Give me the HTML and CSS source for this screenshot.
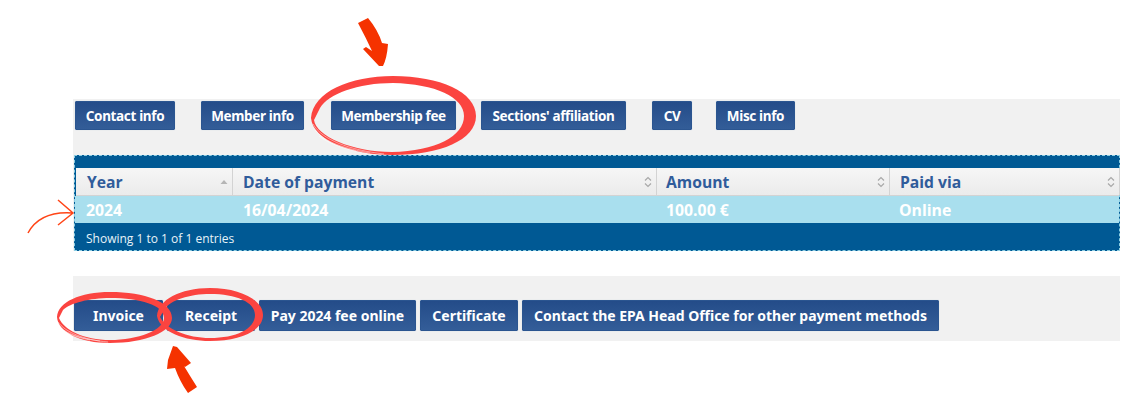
FILE: index.html
```html
<!DOCTYPE html>
<html lang="en">
<head>
<meta charset="utf-8">
<title>Membership fee</title>
<link rel="stylesheet" href="styles.css">
</head>
<body>
<main class="page">
  <section class="tabs-panel">
    <nav class="tabs">
      <a class="btn w-contact">Contact info</a>
      <a class="btn w-member">Member info</a>
      <a class="btn w-fee">Membership fee</a>
      <a class="btn w-sections">Sections' affiliation</a>
      <a class="btn w-cv">CV</a>
      <a class="btn w-misc">Misc info</a>
    </nav>
    <div class="table-wrap">
      <div class="table-top"></div>
      <div class="grid head">
        <div class="th">Year<svg class="sort" viewBox="0 0 10 12"><path d="M1.500 8 5 4l3.500 4z" fill="#b5b5b5"/></svg></div>
        <div class="th">Date of payment<svg class="sort" viewBox="0 0 10 12"><path d="M2 4.500 5 1.500l3 3M2 7.500l3 3 3-3" fill="none" stroke="#a8a8a8" stroke-width="1.200"/></svg></div>
        <div class="th">Amount<svg class="sort" viewBox="0 0 10 12"><path d="M2 4.500 5 1.500l3 3M2 7.500l3 3 3-3" fill="none" stroke="#a8a8a8" stroke-width="1.200"/></svg></div>
        <div class="th">Paid via<svg class="sort" viewBox="0 0 10 12"><path d="M2 4.500 5 1.500l3 3M2 7.500l3 3 3-3" fill="none" stroke="#a8a8a8" stroke-width="1.200"/></svg></div>
      </div>
      <div class="grid row">
        <div class="td">2024</div>
        <div class="td">16/04/2024</div>
        <div class="td">100.00 €</div>
        <div class="td">Online</div>
      </div>
      <div class="table-foot">Showing 1 to 1 of 1 entries</div>
    </div>
  </section>
  <section class="actions-panel">
    <a class="btn w-invoice">Invoice</a>
    <a class="btn w-receipt">Receipt</a>
    <a class="btn w-pay">Pay 2024 fee online</a>
    <a class="btn w-cert">Certificate</a>
    <a class="btn w-office">Contact the EPA Head Office for other payment methods</a>
  </section>
</main>
<svg class="marks" viewBox="0 0 1121 407" width="1121" height="407" aria-hidden="true">
  <g fill="#f53200">
    <path d="M358 23 368 18Q378 30 382 43L388 44Q387 58 383 66L379 66 363 49 366 47 372 51Q366 38 358 23Z"/>
    <path d="M173 346 177 347 191 363 185 367 184 366Q190 376 197 387L188 393Q180 382 175 368L167 369 168 360Z"/>
  </g>
  <path d="M28 233Q40 211 72 213M58 200 73 213 58 225" fill="none" stroke="#ff4517" stroke-width="1.500"/>
  <g fill="#fb4440" fill-rule="evenodd">
    <path d="M311 118C313 92 350 76 393 76 440 76 476 92 476 116 476 140 440 155 393 155 350 155 313 140 311 118ZM314 120C316 136 352 152 392 152 436 151 464 136 464 116 464 97 435 84 393 83 358 83 328 94 320 108Z"/>
    <path d="M57 317C58 302 80 292 110 292 145 292 172 302 172 318 172 332 145 343 110 343 80 343 58 332 57 317ZM59 318C64 330 84 340 110 340 138 340 164 330 164 318 164 305 140 298 110 298 90 298 70 303 63 310Z"/>
    <path d="M157 316C158 300 180 288 210 288 240 288 263 300 263 315 263 331 240 341 210 341 185 341 160 332 157 316ZM160 317C166 329 187 338 210 338 236 338 255 329 255 315 255 302 236 294 210 294 190 294 170 300 164 310Z"/>
  </g>
  <g fill="none" stroke="#ffffff" stroke-width=".6" opacity=".8">
    <path d="M313 124C322 140 350 150 384 154M315 130C324 142 346 149 370 153M319 136C328 143 342 148 356 151"/>
    <path d="M58 322C65 332 84 340 108 342M60 327C68 335 84 339 100 341M63 331C70 335 80 338 90 340"/>
  </g>
</svg>
</body>
</html>
```
FILE: styles.css
```css
* { box-sizing: border-box; }
html, body { margin: 0; background: #fff; }
body { position: relative; width: 1121px; height: 407px; overflow: hidden; font-family: "Open Sans", "Liberation Sans", sans-serif; }
.page { padding: 99px 1px 0 73px; }
.tabs-panel { background: #f1f1f1; }
.tabs { display: flex; height: 56px; padding: 2px 0 0 2px; align-items: flex-start; gap: 26px; }
.btn {
  display: flex; align-items: center; justify-content: center; height: 29px;
  border: 1px solid #2b5590; border-radius: 1px;
  box-shadow: 0 0 1px #b9c6d8;
  background: linear-gradient(#244c89, #335d98);
  color: #fff; font: 700 13.5px "Noto Sans", "Open Sans", sans-serif; white-space: nowrap;
  letter-spacing: -.35px;
}
.w-contact { width: 100px; }
.w-member { width: 103px; }
.w-fee { width: 125px; margin-left: 1px; }
.w-sections { width: 145px; margin-left: -1px; }
.w-cv { width: 40px; }
.w-misc { width: 79px; margin-left: -2px; }
.table-wrap { margin-left: 1px; border: 1px dashed #8ccfe4; background: #005994; height: 96px; }
.table-top { height: 12px; }
.grid { display: grid; grid-template-columns: 157px 424px 233px 230px; }
.head { height: 28px; background: linear-gradient(#f6f6f6, #ebebeb); color: #305c9b; font-size: 15.7px; font-weight: 700; border-bottom: 1px solid #d3d3d3; margin-left: 1px; }
.th { display: flex; align-items: center; justify-content: space-between; padding: 1px 3px 0 10px; border-right: 1px solid #d3d3d3; }
.th:first-child { padding-left: 11px; }
.th:nth-child(3) { padding-left: 9px; }
.sort { width: 10px; height: 12px; }
.row { height: 28px; background: #a9dfee; color: #fff; font-size: 15.8px; font-weight: 700; border-bottom: 1px solid #005994; }
.td { display: flex; align-items: center; padding-left: 10px; }
.row .td:first-child { padding-left: 11px; }
.row .td:nth-child(2) { padding-left: 11px; }
.row .td:nth-child(3) { padding-left: 10px; }
.table-foot { display: flex; align-items: center; height: 28px; padding-left: 11px; color: #e8f3f8; font-size: 12px; font-weight: 400; }
.actions-panel { display: flex; gap: 4px; align-items: flex-start; margin-top: 25px; height: 65px; padding: 24px 0 0 1px; background: #f1f1f1; }
.actions-panel .btn { height: 31px; font-size: 14px; letter-spacing: -.02px; }
.w-invoice { width: 89px; }
.w-receipt { width: 88px; }
.w-pay { width: 157px; }
.w-cert { width: 98px; }
.w-office { width: 417px; }
.marks { position: absolute; left: 0; top: 0; pointer-events: none; }
```
